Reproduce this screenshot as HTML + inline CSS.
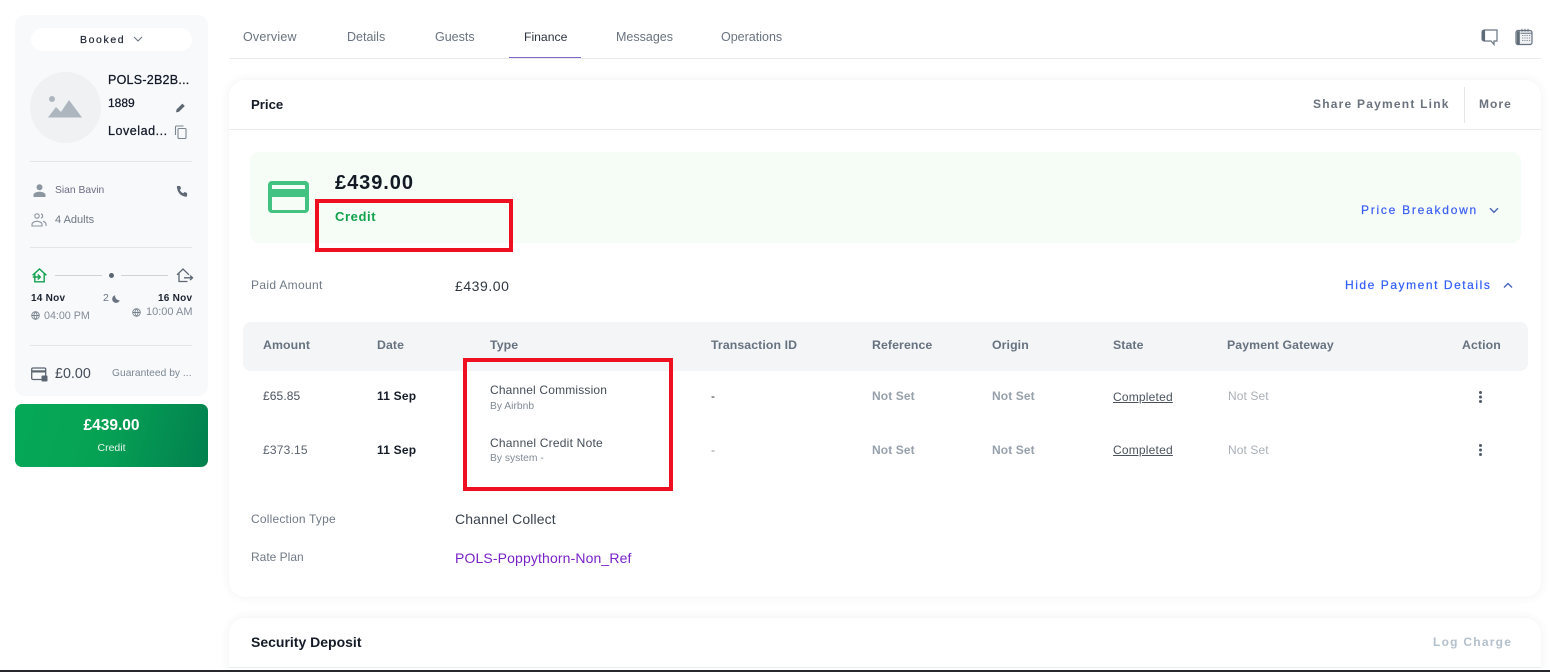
<!DOCTYPE html>
<html><head><meta charset="utf-8"><style>
*{box-sizing:border-box}
html,body{margin:0;padding:0;background:#fff;width:1550px;height:672px;overflow:hidden}
body{font-family:"Liberation Sans",sans-serif}
#p{position:relative;width:1550px;height:672px;overflow:hidden}
.t{position:absolute;white-space:nowrap;line-height:20px;font-size:12px;color:#39424e}
.b{font-weight:700}
.box{position:absolute}
svg{position:absolute;overflow:visible}
.hd{font-size:12.3px;font-weight:700;color:#66727f;letter-spacing:.1px}
.nb{font-size:12px;font-weight:700;color:#97a1ac;letter-spacing:.1px}
.tab{font-size:12.5px;color:#69737f;top:27px}
.hr{position:absolute;left:30px;width:162px;height:1px;background:#e3e5ea}
</style></head><body><div id="p">

<!-- sidebar -->
<div class="box" style="left:15px;top:15px;width:193px;height:381px;background:#f8f9fb;border-radius:10px"></div>
<div class="box" style="left:31px;top:28px;width:161px;height:23px;background:#fff;border-radius:12px"></div>
<div class="t" style="left:80px;top:30px;font-size:10.5px;color:#1d2430;letter-spacing:1.6px;-webkit-text-stroke:.2px #1d2430">Booked</div>
<svg style="left:133px;top:36px" width="10" height="7" viewBox="0 0 10 7"><path d="M1 1l4 4 4-4" fill="none" stroke="#6b7683" stroke-width="1.1"/></svg>
<div class="box" style="left:30px;top:72px;width:71px;height:71px;border-radius:50%;background:#f0f1f3"></div>
<svg style="left:48px;top:95px" width="36" height="25" viewBox="0 0 36 25"><circle cx="4" cy="4" r="3" fill="#adb6bf"/><path d="M0 22.500L8 12l5 5L21 5l13 17.500z" fill="#adb6bf"/></svg>
<div class="t" style="left:108px;top:70px;font-size:12.5px;color:#111827;letter-spacing:.25px;-webkit-text-stroke:.25px #111827">POLS-2B2B...</div>
<div class="t" style="left:108px;top:93px;font-size:12px;color:#111827;-webkit-text-stroke:.25px #111827">1889</div>
<div class="t" style="left:108px;top:121px;font-size:12.5px;color:#111827;-webkit-text-stroke:.25px #111827;letter-spacing:.55px">Lovelad...</div>
<svg style="left:175px;top:102px" width="11" height="11" viewBox="0 0 11 11"><path d="M1 10.400l.6-3L7.400 1.600l2.400 2.400L4 9.800z" fill="#5d6873"/></svg>
<svg style="left:174px;top:125px" width="14" height="14" viewBox="0 0 14 14"><path d="M9.500 1H2.500C1.900 1 1.500 1.400 1.500 2v8" fill="none" stroke="#7a8590" stroke-width="1.100"/><rect x="4" y="3.500" width="8" height="10" rx="1" fill="none" stroke="#7a8590" stroke-width="1.100"/></svg>
<div class="hr" style="top:161px"></div>
<svg style="left:33px;top:184px" width="13" height="13" viewBox="0 0 13 13"><circle cx="6.500" cy="3.300" r="3" fill="#8c96a1"/><path d="M.5 13v-2c0-2 3-3.200 6-3.200s6 1.200 6 3.200v2z" fill="#8c96a1"/></svg>
<div class="t" style="left:55px;top:181px;font-size:10.3px;color:#6d6b85">Sian Bavin</div>
<svg style="left:176px;top:185px" width="13" height="13" viewBox="0 0 13 13"><path d="M1.500 1h2.600l1 2.600-1.300 1.300c.7 1.500 1.900 2.700 3.400 3.400l1.300-1.300 2.600 1v2.600c0 .7-.6 1.200-1.300 1.100C4.900 11.300 1.500 7.800.9 2.300.8 1.600 1 1 1.500 1z" fill="#5f6a75"/></svg>
<svg style="left:31px;top:212px" width="16" height="15" viewBox="0 0 16 15"><g fill="none" stroke="#8c96a1" stroke-width="1.100"><circle cx="6" cy="4" r="2.200"/><path d="M1 14v-1.500c0-2 2.500-3.200 5-3.200s5 1.200 5 3.200V14z"/><path d="M10 1.800a2.300 2.300 0 010 4.400M12 9.300c1.700.5 3 1.500 3 3V14"/></g></svg>
<div class="t" style="left:55px;top:210px;font-size:11px;color:#6f7883">4 Adults</div>
<div class="hr" style="top:247px"></div>

<svg style="left:32px;top:268px" width="15" height="15" viewBox="0 0 15 15"><g fill="none" stroke="#12a150" stroke-width="1.400"><path d="M.6 7.300L7.500 1l6.900 6.300"/><path d="M2.800 5.600v8.200h9.400V5.600"/><path d="M.8 9h7.200M5.800 6.500L8.300 9l-2.500 2.500"/></g></svg>
<div class="box" style="left:55px;top:275px;width:47px;height:1px;background:#cfd3d9"></div>
<div class="box" style="left:109px;top:273px;width:5px;height:5px;border-radius:50%;background:#5b6672"></div>
<div class="box" style="left:121px;top:275px;width:47px;height:1px;background:#cfd3d9"></div>
<svg style="left:176px;top:268px" width="17" height="15" viewBox="0 0 17 15"><g fill="none" stroke="#5b6672" stroke-width="1.300"><path d="M1 6.800L7 1l6 5.800"/><path d="M3 5.500v8h8.500"/><path d="M8 9.800h8.500M14 7.500l2.500 2.300-2.500 2.300"/></g></svg>
<div class="t b" style="left:31px;top:289px;font-size:10px;color:#1c2430;letter-spacing:.25px">14 Nov</div>
<div class="t" style="left:103px;top:288px;font-size:10.5px;color:#6a7480">2</div>
<svg style="left:112px;top:295px" width="8" height="8" viewBox="0 0 8 8"><path d="M3.200.2a3.900 3.900 0 104.600 5A4.200 4.200 0 013.200.200z" fill="#6a7480"/></svg>
<div class="t b" style="left:158px;top:289px;font-size:10px;color:#1c2430;letter-spacing:.25px">16 Nov</div>
<svg style="left:31px;top:311px" width="9" height="9" viewBox="0 0 9 9"><g fill="none" stroke="#77818c" stroke-width=".9"><circle cx="4.500" cy="4.500" r="3.800"/><path d="M.7 4.500h7.600M4.500.7c-2 2.400-2 5.200 0 7.600 2-2.400 2-5.200 0-7.600"/></g></svg>
<div class="t" style="left:44px;top:306px;font-size:10.7px;color:#828b96">04:00 PM</div>
<svg style="left:132px;top:308px" width="9" height="9" viewBox="0 0 9 9"><g fill="none" stroke="#77818c" stroke-width=".9"><circle cx="4.500" cy="4.500" r="3.800"/><path d="M.7 4.500h7.600M4.500.7c-2 2.400-2 5.200 0 7.600 2-2.400 2-5.200 0-7.600"/></g></svg>
<div class="t" style="left:146px;top:302px;font-size:11px;color:#828b96">10:00 AM</div>
<div class="hr" style="top:345px"></div>
<svg style="left:31px;top:367px" width="17" height="15" viewBox="0 0 17 15"><rect x=".7" y="1" width="14" height="11.500" rx="1.300" fill="none" stroke="#5b6672" stroke-width="1.300"/><rect x="1" y="3.300" width="13.500" height="2.200" fill="#5b6672"/><rect x="10.500" y="8.500" width="6" height="6" rx="1" fill="#5b6672"/></svg>
<div class="t" style="left:55px;top:364px;font-size:14.3px;color:#444d58">£0.00</div>
<div class="t" style="left:112px;top:364px;font-size:10.2px;color:#7b8692;letter-spacing:.05px">Guaranteed by ...</div>

<div class="box" style="left:15px;top:404px;width:193px;height:63px;border-radius:7px;background:linear-gradient(105deg,#05a957 0%,#06a254 45%,#02804f 100%)"></div>
<div class="t b" style="left:15px;width:193px;text-align:center;top:416px;font-size:15.5px;color:#fff">£439.00</div>
<div class="t" style="left:15px;width:193px;text-align:center;top:438px;font-size:10.5px;color:#e6f5ec">Credit</div>

<!-- tabs -->
<div class="t tab" style="left:243px;letter-spacing:.2px">Overview</div>
<div class="t tab" style="left:347px">Details</div>
<div class="t tab" style="left:435px">Guests</div>
<div class="t tab" style="left:524px;color:#2d3540;font-size:12.2px">Finance</div>
<div class="t tab" style="left:616px">Messages</div>
<div class="t tab" style="left:721px">Operations</div>
<div class="box" style="left:229px;top:58px;width:1312px;height:1px;background:#e8eaed"></div>
<div class="box" style="left:509px;top:57px;width:72px;height:1px;background:#7f68c9"></div>
<svg style="left:1481px;top:29px" width="17" height="17" viewBox="0 0 17 17"><path d="M3.500 1h12.500v11h-3v3.500L10 12H3.500z" fill="#fff" stroke="#6a7682" stroke-width="1.200"/><path d="M3.500 1C2 1 1 2 1 3.500v6C1 11 2 12 3.500 12z" fill="#5f6b77" stroke="#5f6b77"/></svg>
<svg style="left:1515px;top:28px" width="18" height="18" viewBox="0 0 18 18"><rect x="1" y="2.500" width="16" height="14" rx="2" fill="#f0f1f3" stroke="#667280" stroke-width="1.200"/><path d="M1.800 3.500v12c0 .7.500 1 1 1h2V3z" fill="#5f6b77"/><path d="M7 .8v3M10 .8v3M13 .8v3M5.500 5.200h11" stroke="#667280" stroke-width="1"/><path d="M7 7.500h9M7 10h9M7 12.500h9" stroke="#8d97a2" stroke-width="1.100" stroke-dasharray="1.300 1"/></svg>

<!-- price card -->
<div class="box" style="left:229px;top:80px;width:1312px;height:517px;background:#fff;border-radius:16px;box-shadow:0 0 10px rgba(40,50,70,.07)"></div>
<div class="box" style="left:229px;top:129px;width:1312px;height:1px;background:#ebecef"></div>
<div class="t b" style="left:251px;top:95px;font-size:13.2px;color:#141b26">Price</div>
<div class="t b" style="left:1313px;top:94px;font-size:12px;color:#6a737d;letter-spacing:1.220px">Share Payment Link</div>
<div class="box" style="left:1464px;top:87px;width:1px;height:36px;background:#e3e5e8"></div>
<div class="t b" style="left:1479px;top:94px;font-size:12px;color:#6a737d;letter-spacing:1.050px">More</div>

<div class="box" style="left:250px;top:152px;width:1271px;height:91px;background:#f5fdf6;border-radius:9px"></div>
<svg style="left:268px;top:181px" width="42" height="33" viewBox="0 0 42 33"><rect x="0" y="0" width="41" height="32" rx="4" fill="#43c381"/><rect x="4" y="4" width="33" height="4" fill="#f5fdf6"/><rect x="4" y="16" width="33" height="13" fill="#f5fdf6"/></svg>
<div class="t b" style="left:335px;top:173px;font-size:20px;color:#131a25;letter-spacing:.95px">£439.00</div>
<div class="t b" style="left:335px;top:207px;font-size:13px;color:#12a34c;letter-spacing:.6px">Credit</div>
<div class="box" style="left:315px;top:199px;width:198px;height:53px;border:4px solid #ee1020"></div>
<div class="t" style="left:1361px;top:200px;font-size:12px;color:#3a5cf5;letter-spacing:1.750px;-webkit-text-stroke:.2px #3a5cf5">Price Breakdown</div>
<svg style="left:1489px;top:207px" width="10" height="7" viewBox="0 0 10 7"><path d="M1 1.200l4 4 4-4" fill="none" stroke="#4a66b8" stroke-width="1.400"/></svg>

<div class="t" style="left:251px;top:275px;font-size:12px;color:#707a86;letter-spacing:.33px">Paid Amount</div>
<div class="t" style="left:455px;top:276px;font-size:14px;color:#2f3842;letter-spacing:.55px">£439.00</div>
<div class="t" style="left:1345px;top:275px;font-size:12px;color:#2f5bfa;letter-spacing:1.550px;-webkit-text-stroke:.2px #2f5bfa">Hide Payment Details</div>
<svg style="left:1503px;top:282px" width="10" height="7" viewBox="0 0 10 7"><path d="M1 5.500l4-4 4 4" fill="none" stroke="#4a66b8" stroke-width="1.400"/></svg>

<!-- table -->
<div class="box" style="left:243px;top:322px;width:1285px;height:49px;background:#f4f5f7;border-radius:8px"></div>
<div class="t hd" style="left:263px;top:335px">Amount</div>
<div class="t hd" style="left:377px;top:335px">Date</div>
<div class="t hd" style="left:490px;top:335px">Type</div>
<div class="t hd" style="left:711px;top:335px">Transaction ID</div>
<div class="t hd" style="left:872px;top:335px">Reference</div>
<div class="t hd" style="left:992px;top:335px">Origin</div>
<div class="t hd" style="left:1113px;top:335px">State</div>
<div class="t hd" style="left:1227px;top:335px">Payment Gateway</div>
<div class="t hd" style="left:1462px;top:335px">Action</div>

<div class="t" style="left:263px;top:386px;font-size:12px;color:#4a535e;letter-spacing:.1px">£65.85</div>
<div class="t b" style="left:377px;top:386px;font-size:12px;color:#151c27;letter-spacing:.2px">11 Sep</div>
<div class="t" style="left:490px;top:380px;font-size:12px;color:#434c57;letter-spacing:.17px">Channel Commission</div>
<div class="t" style="left:490px;top:397px;font-size:10.3px;color:#808a95">By Airbnb</div>
<div class="t" style="left:711px;top:386px;font-size:12px;color:#2a323c">-</div>
<div class="t nb" style="left:872px;top:386px">Not Set</div>
<div class="t nb" style="left:992px;top:386px">Not Set</div>
<div class="t" style="left:1113px;top:387px;font-size:12px;color:#4a535e;text-decoration:underline;letter-spacing:.2px">Completed</div>
<div class="t" style="left:1228px;top:386px;font-size:12px;color:#a9b0b8;letter-spacing:.1px">Not Set</div>
<div class="box" style="left:1479px;top:391px;width:3px;height:3px;border-radius:50%;background:#505b67;box-shadow:0 4.500px 0 #505b67,0 9px 0 #505b67"></div>

<div class="t" style="left:263px;top:440px;font-size:12px;color:#5a636e;letter-spacing:.2px">£373.15</div>
<div class="t b" style="left:377px;top:440px;font-size:12px;color:#151c27;letter-spacing:.2px">11 Sep</div>
<div class="t" style="left:490px;top:433px;font-size:12px;color:#434c57;letter-spacing:.22px">Channel Credit Note</div>
<div class="t" style="left:490px;top:449px;font-size:10.3px;color:#808a95">By system -</div>
<div class="t" style="left:711px;top:440px;font-size:12px;color:#8a929c">-</div>
<div class="t nb" style="left:872px;top:440px">Not Set</div>
<div class="t nb" style="left:992px;top:440px">Not Set</div>
<div class="t" style="left:1113px;top:440px;font-size:12px;color:#4a535e;text-decoration:underline;letter-spacing:.2px">Completed</div>
<div class="t" style="left:1228px;top:440px;font-size:12px;color:#a9b0b8;letter-spacing:.1px">Not Set</div>
<div class="box" style="left:1479px;top:444px;width:3px;height:3px;border-radius:50%;background:#505b67;box-shadow:0 4.500px 0 #505b67,0 9px 0 #505b67"></div>

<div class="box" style="left:463px;top:358px;width:210px;height:133px;border:4px solid #ee1020"></div>

<div class="t" style="left:251px;top:509px;font-size:12px;color:#707a86;letter-spacing:.2px">Collection Type</div>
<div class="t" style="left:455px;top:509px;font-size:14px;color:#3a434e;letter-spacing:.13px">Channel Collect</div>
<div class="t" style="left:251px;top:547px;font-size:12px;color:#707a86">Rate Plan</div>
<div class="t" style="left:455px;top:548px;font-size:14px;color:#7a22c9;letter-spacing:.13px">POLS-Poppythorn-Non_Ref</div>

<!-- security card -->
<div class="box" style="left:229px;top:618px;width:1312px;height:70px;background:#fff;border-radius:16px;box-shadow:0 0 10px rgba(40,50,70,.07)"></div>
<div class="box" style="left:229px;top:667px;width:1312px;height:1px;background:#ebecef"></div>
<div class="t b" style="left:251px;top:632px;font-size:14px;color:#141b26">Security Deposit</div>
<div class="t b" style="left:1433px;top:632px;font-size:12px;color:#b3bfcc;letter-spacing:1.250px">Log Charge</div>

<div class="box" style="left:0;top:668px;width:1550px;height:2px;background:#fff"></div>
<div class="box" style="left:0;top:670px;width:1550px;height:2px;background:#26282b"></div>
</div></body></html>
